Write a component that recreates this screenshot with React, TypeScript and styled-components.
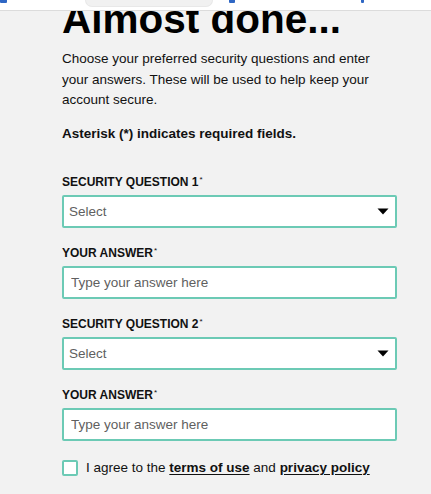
import React from 'react';
import styled, {createGlobalStyle} from 'styled-components';

const GlobalStyle = createGlobalStyle`
  html, body {
    margin: 0;
    padding: 0;
    background: #f2f2f2;
    font-family: "Liberation Sans", Arial, sans-serif;
    color: #111;
  }
`;

const Page = styled.div`
  width: 431px;
  height: 494px;
  overflow: hidden;
  background: #f2f2f2;
`;

// top bar, scrolled so only its bottom edge shows
const Header = styled.header`
  height: 10px;
  background: #fff;
  border-bottom: 1px solid #dcdcdc;
  display: flex;
  align-items: flex-start;
  overflow: hidden;
`;

const HeaderIcon = styled.span<{$left: number; $w: number}>`
  display: block;
  margin-left: ${p => p.$left}px;
  width: ${p => p.$w}px;
  height: 3px;
  background: #2f67c4;
  border-radius: 0 0 1px 1px;
`;

const SearchPill = styled.span`
  display: block;
  margin-left: 78px;
  width: 126px;
  height: 6px;
  background: #f1f1f1;
  border: 1px solid #e8e8e8;
  border-top: none;
  border-radius: 0 0 8px 8px;
`;

const Main = styled.main`
  overflow: hidden;
  padding: 0 34px 0 62px;
`;

const Heading = styled.h1`
  margin: -12px 0 0;
  font-size: 40.5px;
  line-height: 40px;
  font-weight: 700;
  letter-spacing: 0;
  color: #000;
`;

const Intro = styled.p`
  margin: 10px 0 0;
  font-size: 13.5px;
  line-height: 20.5px;
  color: #111;
`;

const Note = styled.p`
  margin: 13px 0 0;
  font-size: 13.5px;
  line-height: 20px;
  font-weight: 700;
  color: #111;
`;

const Form = styled.form`
  margin-top: 31px;
  display: flex;
  flex-direction: column;
  gap: 18px;
`;

const Field = styled.div`
  display: flex;
  flex-direction: column;
  gap: 6px;
`;

const Label = styled.label`
  font-size: 12px;
  line-height: 14px;
  font-weight: 700;
  text-transform: uppercase;
  color: #111;
`;

const Req = styled.sup`
  font-size: 8px;
  line-height: 0;
  vertical-align: 4px;
  font-weight: 400;
  margin-left: 1px;
`;

const Box = styled.div`
  box-sizing: border-box;
  height: 33px;
  background: #fff;
  border: 2px solid #6ccab5;
  border-radius: 2px;
  display: flex;
  align-items: center;
  justify-content: space-between;
  padding: 0 6px 0 5px;
`;

const SelectText = styled.span`
  font-size: 13.5px;
  color: #5f5f5f;
`;

const Caret = styled.svg`
  width: 12px;
  height: 7px;
`;

const Input = styled.input`
  box-sizing: border-box;
  height: 33px;
  width: 100%;
  background: #fff;
  border: 2px solid #6ccab5;
  border-radius: 2px;
  padding: 0 7px;
  font-family: inherit;
  font-size: 13.5px;
  color: #111;
  outline: none;
  &::placeholder {
    color: #5f5f5f;
  }
`;

const Agree = styled.div`
  margin-top: 18px;
  display: flex;
  align-items: center;
  gap: 8px;
  font-size: 13.5px;
  line-height: 18px;
  color: #111;
`;

const Check = styled.span`
  box-sizing: border-box;
  width: 16px;
  height: 16px;
  background: #fff;
  border: 2px solid #6ccab5;
  border-radius: 2px;
  flex: none;
`;

const Link = styled.a`
  font-weight: 700;
  color: #111;
  text-decoration: underline;
  text-underline-offset: 2px;
`;

const SelectBox = ({placeholder}: {placeholder: string}) => (
  <Box>
    <SelectText>{placeholder}</SelectText>
    <Caret viewBox="0 0 12 7">
      <path d="M0.5 0.5 L11.5 0.5 L6 6.5 Z" fill="#000" />
    </Caret>
  </Box>
);

const App: React.FC = () => {
  return (
    <Page>
      <GlobalStyle />
      <Header>
        <HeaderIcon $left={0} $w={7} />
        <SearchPill />
        <HeaderIcon $left={16} $w={6} />
        <HeaderIcon $left={126} $w={3} />
      </Header>
      <Main>
        <Heading>Almost done...</Heading>
        <Intro>
          Choose your preferred security questions and enter your answers. These will be used to help keep your
          account secure.
        </Intro>
        <Note>Asterisk (*) indicates required fields.</Note>
        <Form>
          <Field>
            <Label>Security Question 1<Req>*</Req></Label>
            <SelectBox placeholder="Select" />
          </Field>
          <Field>
            <Label>Your Answer<Req>*</Req></Label>
            <Input placeholder="Type your answer here" />
          </Field>
          <Field>
            <Label>Security Question 2<Req>*</Req></Label>
            <SelectBox placeholder="Select" />
          </Field>
          <Field>
            <Label>Your Answer<Req>*</Req></Label>
            <Input placeholder="Type your answer here" />
          </Field>
        </Form>
        <Agree>
          <Check />
          <span>
            I agree to the <Link>terms of use</Link> and <Link>privacy policy</Link>
          </span>
        </Agree>
      </Main>
    </Page>
  );
};

export default App;
